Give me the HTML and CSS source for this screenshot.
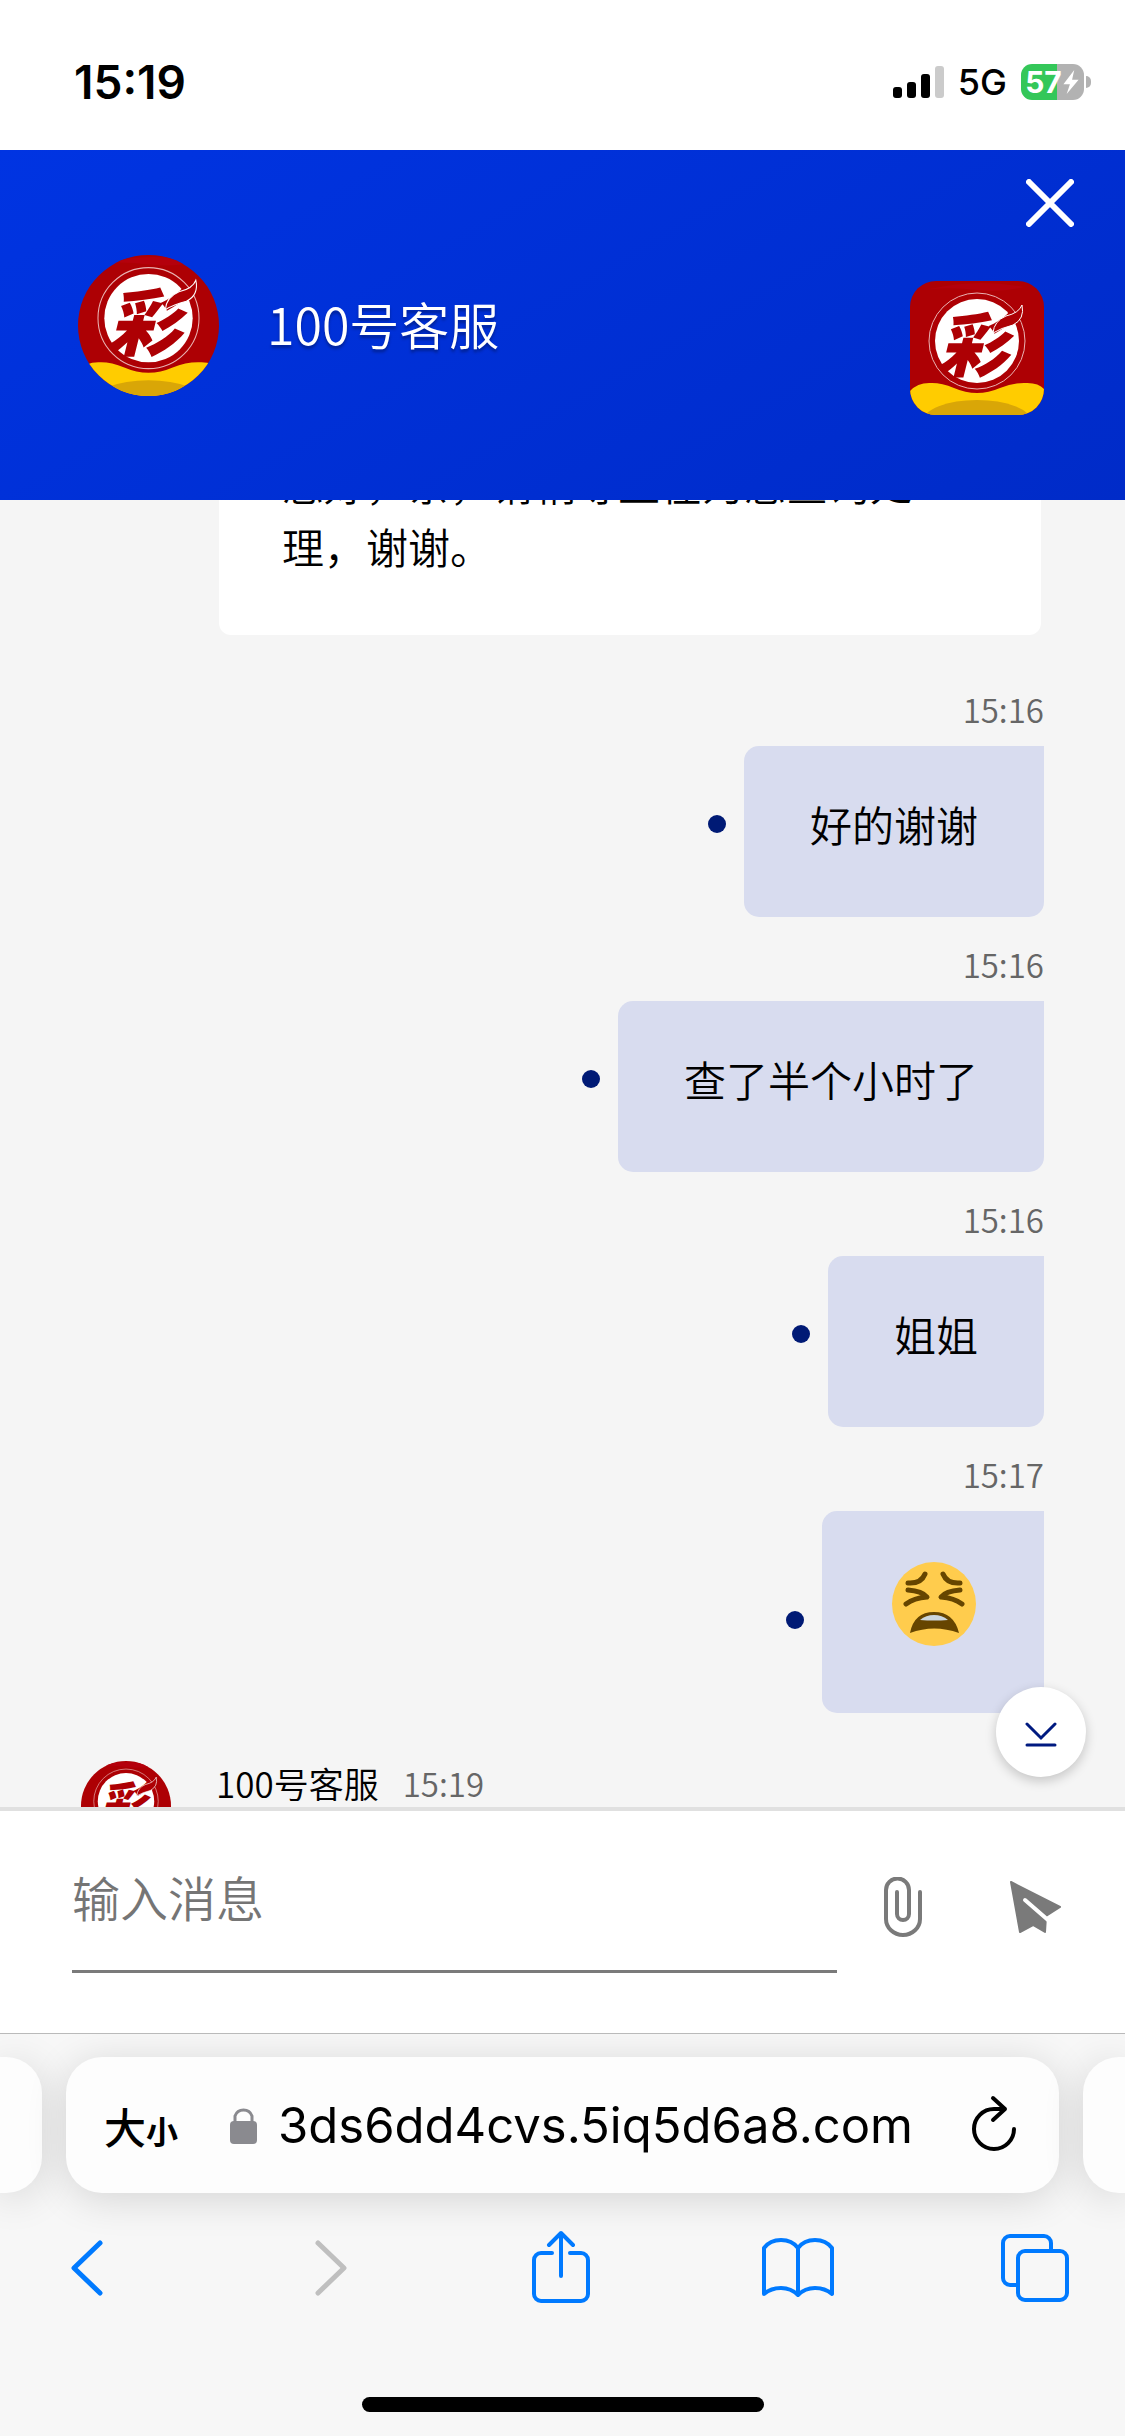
FILE: index.html
```html
<!DOCTYPE html>
<html lang="zh-CN">
<head>
<meta charset="utf-8">
<meta name="viewport" content="width=device-width, initial-scale=1">
<title>100号客服</title>
<link rel="stylesheet" href="styles.css">
</head>
<body>
<svg class="defs" aria-hidden="true">
  <symbol id="brand" viewBox="0 0 134 134">
    <rect width="134" height="134" fill="#ad0004"/>
    <path d="M20 8Q67 -3 114 6Q90 12 67 9T20 8Z" fill="#b4000c"/>
    <path d="M0 110Q8 101 22 102Q32 102 44 107Q67 117 90 107Q102 102 114 102Q128 101 134 108V134H0Z" fill="#fc0"/>
    <ellipse cx="67" cy="140" rx="54" ry="21" fill="#d9a607"/>
    <circle cx="67" cy="60" r="48" fill="#ad0004" stroke="#e9b3b4" stroke-width="1"/>
    <circle cx="67" cy="60" r="42" fill="#fff"/>
    <text class="brand-glyph" x="28" y="90">彩</text>
    <path d="M83 52Q84 40 96 35Q109 32 112 24Q115 38 103 44Q91 47 83 52Z" fill="#ad0004" stroke="#fff" stroke-width="1"/>
  </symbol>
</svg>

<div class="status-bar">
  <time class="clock">15:19</time>
  <div class="status-icons">
    <svg width="51" height="33" viewBox="0 0 51 33" aria-hidden="true">
      <rect x="0" y="21" width="9" height="11" rx="3"/>
      <rect x="14" y="16" width="9" height="16" rx="3"/>
      <rect x="28" y="8" width="9" height="24" rx="3"/>
      <rect x="42" y="0" width="9" height="32" rx="3" fill="#cbcbcb"/>
    </svg>
    <span class="network">5G</span>
    <span class="battery">
      <span class="battery-cell">
        <span class="battery-text">57</span>
        <svg width="18" height="26" viewBox="0 0 16 24" aria-hidden="true"><path d="M11 1L1 14H7L4 23L15 10H9Z" fill="#fff"/></svg>
      </span>
      <span class="battery-tip"></span>
    </span>
  </div>
</div>

<header class="chat-header">
  <svg class="agent-avatar" aria-hidden="true"><use href="#brand"/></svg>
  <h1 class="agent-name">100号客服</h1>
  <div class="header-side">
    <button class="close" type="button" aria-label="关闭">
      <svg width="48" height="48" viewBox="0 0 48 48" aria-hidden="true"><path d="M3 3L45 45M45 3L3 45" fill="none" stroke="#fff" stroke-width="6" stroke-linecap="round"/></svg>
    </button>
    <svg class="app-logo" aria-hidden="true"><use href="#brand"/></svg>
  </div>
</header>

<main class="chat">
  <div class="messages">
    <div class="message-in">
      <p class="bubble-in">您好，亲，请稍等正在为您查询处理，谢谢。</p>
    </div>

    <div class="message-out">
      <time class="time">15:16</time>
      <div class="row"><span class="dot"></span><p class="bubble-out">好的谢谢</p></div>
    </div>
    <div class="message-out">
      <time class="time">15:16</time>
      <div class="row"><span class="dot"></span><p class="bubble-out">查了半个小时了</p></div>
    </div>
    <div class="message-out">
      <time class="time">15:16</time>
      <div class="row"><span class="dot"></span><p class="bubble-out">姐姐</p></div>
    </div>
    <div class="message-out">
      <time class="time">15:17</time>
      <div class="row">
        <span class="dot"></span>
        <div class="bubble-out bubble-emoji">
          <svg width="84" height="84" viewBox="0 0 84 84" role="img" aria-label="疲惫">
            <circle cx="42" cy="42" r="42" fill="#ffcc4d"/>
            <g fill="none" stroke="#664500" stroke-width="5" stroke-linecap="round" stroke-linejoin="round">
              <path d="M16 21Q29 22 33 12M51 12Q55 22 68 21"/>
              <path d="M16 28Q30 29 35 35Q22 36 14 42M68 28Q54 29 49 35Q62 36 70 42"/>
            </g>
            <path d="M18 71Q22 50 42 50T67 71Q42 62 18 71Z" fill="#664500"/>
            <path d="M28 58Q34 53 42 53T56 58Q42 59 28 58Z" fill="#ccd6dd"/>
          </svg>
        </div>
      </div>
    </div>

    <div class="message-agent">
      <svg class="small-avatar" aria-hidden="true"><use href="#brand"/></svg>
      <div class="meta"><span class="meta-name">100号客服</span><time class="time">15:19</time></div>
    </div>
  </div>
  <button class="to-bottom" type="button" aria-label="滚动到底部">
    <svg width="32" height="26" viewBox="0 0 32 26" aria-hidden="true"><path d="M2 2L16 16L30 2M2 23H30" fill="none" stroke="#001a80" stroke-width="3" stroke-linecap="round"/></svg>
  </button>
</main>

<form class="composer">
  <input class="composer-input" type="text" aria-label="输入消息" placeholder="输入消息">
  <button class="icon-button" type="button" aria-label="附件">
    <svg width="38" height="60" viewBox="0 0 38 60" aria-hidden="true"><path d="M36 15V42A17 16 0 0 1 2 42V13A11 11 0 0 1 25 13V37A6 6 0 0 1 13 37V15" fill="none" stroke="#7a7a7a" stroke-width="4" stroke-linecap="round"/></svg>
  </button>
  <button class="icon-button" type="submit" aria-label="发送">
    <svg width="52" height="52" viewBox="0 0 52 52" aria-hidden="true">
      <path d="M1 1L50 26L36 35L35 51L23 44L10 51Z" fill="#7a7a7a" stroke="#7a7a7a" stroke-width="2" stroke-linejoin="round"/>
      <path d="M15 19L38 39" stroke="#fff" stroke-width="4" stroke-linecap="round"/>
    </svg>
  </button>
</form>

<footer class="browser">
  <div class="tabs">
    <span class="tab-peek tab-peek-left"></span>
    <div class="address-bar">
      <button class="text-size" type="button" aria-label="文字大小"><span class="size-large">大</span><span class="size-small">小</span></button>
      <svg class="lock" width="27" height="40" viewBox="0 0 27 40" aria-hidden="true"><path d="M5 17V11A9 9 0 0 1 22 11V17" fill="none" stroke="#8a8a8f" stroke-width="3"/><rect x="0" y="16" width="27" height="23" rx="4" fill="#8a8a8f"/></svg>
      <input class="url" type="text" aria-label="网址" value="3ds6dd4cvs.5iq5d6a8.com">
      <button class="icon-button" type="button" aria-label="重新加载">
        <svg width="46" height="60" viewBox="0 0 46 60" aria-hidden="true"><path d="M43 34A20 20 0 1 1 23 14H34M22 3L34 14L22 25" fill="none" stroke="#000" stroke-width="4" stroke-linecap="round" stroke-linejoin="round"/></svg>
      </button>
    </div>
    <span class="tab-peek tab-peek-right"></span>
  </div>
  <nav class="toolbar" aria-label="浏览器">
    <button class="tool" type="button" aria-label="后退">
      <svg width="32" height="56" viewBox="0 0 32 56" aria-hidden="true"><path d="M29 3L3 28L29 53" fill="none" stroke="#007aff" stroke-width="5" stroke-linecap="round" stroke-linejoin="round"/></svg>
    </button>
    <button class="tool" type="button" aria-label="前进">
      <svg width="46" height="56" viewBox="0 0 46 56" aria-hidden="true"><path d="M17 3L43 28L17 53" fill="none" stroke="#bfbfbf" stroke-width="5" stroke-linecap="round" stroke-linejoin="round"/></svg>
    </button>
    <button class="tool" type="button" aria-label="分享">
      <svg width="58" height="76" viewBox="0 0 58 76" aria-hidden="true"><path d="M20 23H9A7 7 0 0 0 2 30V64A7 7 0 0 0 9 71H49A7 7 0 0 0 56 64V30A7 7 0 0 0 49 23H38M29 46V3M17 15L29 3L41 15" fill="none" stroke="#007aff" stroke-width="4" stroke-linecap="round" stroke-linejoin="round"/></svg>
    </button>
    <button class="tool" type="button" aria-label="书签">
      <svg width="72" height="60" viewBox="0 0 72 60" aria-hidden="true"><path d="M36 10Q30 2 19 2T2 10V56Q9 50 19 50T36 57Q43 50 53 50T70 56V10Q64 2 53 2T36 10V57" fill="none" stroke="#007aff" stroke-width="4" stroke-linejoin="round"/></svg>
    </button>
    <button class="tool" type="button" aria-label="标签页">
      <svg width="68" height="68" viewBox="0 0 68 68" aria-hidden="true"><g fill="none" stroke="#007aff" stroke-width="4"><path d="M50 17V9A7 7 0 0 0 43 2H9A7 7 0 0 0 2 9V44A7 7 0 0 0 9 51H17"/><rect x="17" y="17" width="49" height="49" rx="7"/></g></svg>
    </button>
  </nav>
  <div class="home-indicator"></div>
</footer>
</body>
</html>
```
FILE: styles.css
```css
* { box-sizing: border-box; }

body {
  margin: 0;
  height: 100vh;
  display: flex;
  flex-direction: column;
  background: #fff;
  color: #000;
  font-family: "Noto Sans CJK SC", sans-serif;
  font-weight: 350;
}

h1, p { margin: 0; }

button {
  padding: 0;
  border: 0;
  background: none;
  color: inherit;
  font: inherit;
}

button svg { display: block; }

.defs { display: none; }

.brand-glyph {
  font: italic 900 70px "Noto Sans CJK SC", sans-serif;
  fill: #ad0004;
}

/* Status bar */
.status-bar {
  flex: none;
  height: 150px;
  padding: 0 34px 0 74px;
  display: flex;
  align-items: center;
  justify-content: space-between;
  font-family: Inter, sans-serif;
}

.clock {
  padding-top: 14px;
  font-size: 46px;
  font-weight: 600;
}

.status-icons {
  padding-top: 14px;
  display: flex;
  align-items: center;
  gap: 14px;
}

.network {
  font-size: 36px;
  font-weight: 500;
}

.battery {
  display: flex;
  align-items: center;
  gap: 2px;
}

.battery-cell {
  width: 63px;
  height: 36px;
  border-radius: 11px;
  display: flex;
  align-items: center;
  justify-content: center;
  background: linear-gradient(90deg, #34c759 57%, #b2b2b2 57%);
}

.battery-text {
  color: #fff;
  font-size: 30px;
  font-weight: 700;
  line-height: 36px;
}

.battery-tip {
  width: 5px;
  height: 12px;
  border-radius: 0 5px 5px 0;
  background: #b2b2b2;
}

/* Chat header */
.chat-header {
  flex: none;
  height: 350px;
  padding: 0 81px 0 78px;
  display: flex;
  align-items: center;
  background: linear-gradient(150deg, #0034e2, #002bc8);
  color: #fff;
}

.agent-avatar {
  width: 141px;
  height: 141px;
  border-radius: 50%;
}

.agent-name {
  flex: 1;
  margin-left: 48px;
  padding-bottom: 4px;
  font-size: 50px;
  font-weight: 350;
  line-height: 72px;
  text-shadow: 0 3px 3px rgba(0, 0, 0, .3);
}

.header-side {
  align-self: stretch;
  padding-top: 29px;
  display: flex;
  flex-direction: column;
  align-items: flex-end;
  gap: 54px;
}

.close { margin-right: -30px; }

.app-logo {
  width: 134px;
  height: 134px;
  border-radius: 26px;
}

/* Conversation */
.chat {
  flex: 1;
  min-height: 0;
  overflow: hidden;
  position: relative;
  background: #f5f5f5;
}

/* The list is scrolled part of the way through the conversation. */
.messages {
  margin-top: -94px;
  padding: 0 81px;
}

.message-in { padding: 0 3px 27px 138px; }

.bubble-in {
  padding: 45px 63px 58px;
  border-radius: 12px;
  background: #fff;
  font-size: 42px;
  line-height: 63px;
}

.message-out {
  padding-top: 23px;
  display: flex;
  flex-direction: column;
  align-items: flex-end;
}

.time {
  color: #666;
  font-size: 33px;
  line-height: 48px;
}

.row {
  padding-top: 13px;
  display: flex;
  align-items: flex-end;
  gap: 18px;
}

.dot {
  width: 18px;
  height: 18px;
  margin-bottom: 84px;
  border-radius: 50%;
  background: #001a75;
}

.bubble-out {
  padding: 46px 66px 62px;
  border-radius: 15px 0 15px 15px;
  background: #d8dcef;
  font-size: 42px;
  line-height: 63px;
}

.bubble-emoji {
  padding: 51px 68px 67px 70px;
}

.bubble-emoji svg { display: block; }

.message-agent {
  padding-top: 48px;
  display: flex;
  gap: 45px;
}

.small-avatar {
  width: 90px;
  height: 90px;
  border-radius: 50%;
}

.meta {
  display: flex;
  align-items: center;
  gap: 24px;
  height: 44px;
}

.meta-name {
  font-size: 35px;
  line-height: 48px;
}

.to-bottom {
  position: absolute;
  right: 39px;
  bottom: 30px;
  width: 90px;
  height: 90px;
  border-radius: 50%;
  display: flex;
  align-items: center;
  justify-content: center;
  background: #fff;
  box-shadow: 0 4px 12px rgba(0, 0, 0, .2);
}

.to-bottom svg { margin-top: 6px; }

/* Message composer */
.composer {
  flex: none;
  height: 227px;
  padding: 36px 63px 60px 72px;
  border-top: 4px solid #e0e0e0;
  border-bottom: 1px solid #bababa;
  display: flex;
  align-items: center;
  background: #fff;
}

.composer-input {
  flex: 1;
  min-width: 0;
  height: 126px;
  margin-right: 47px;
  padding: 0 0 26px;
  border: 0;
  border-bottom: 3px solid #7a7a7a;
  outline: 0;
  background: none;
  font: 350 48px "Noto Sans CJK SC", sans-serif;
}

.composer-input::placeholder { color: #757575; }

.composer .icon-button { padding-bottom: 6px; }
.composer .icon-button + .icon-button { margin-left: 88px; }

/* Browser controls */
.browser {
  flex: none;
  background: #f7f7f7;
  overflow: hidden;
}

.tabs {
  padding: 23px 0 37px;
  display: flex;
  gap: 24px;
}

.tab-peek,
.address-bar {
  height: 136px;
  background: #fdfdfd;
  box-shadow: 0 6px 40px rgba(0, 0, 0, .14);
}

.tab-peek { width: 42px; }
.tab-peek-left { border-radius: 0 36px 36px 0; }
.tab-peek-right { border-radius: 36px 0 0 36px; }

.address-bar {
  flex: 1;
  min-width: 0;
  padding: 0 42px 0 38px;
  border-radius: 36px;
  display: flex;
  align-items: center;
}

.text-size {
  display: flex;
  align-items: baseline;
}

.size-large {
  font-size: 42px;
  font-weight: 500;
}

.size-small {
  font-size: 32px;
  font-weight: 700;
}

.lock { margin: 0 21px 0 52px; }

.url {
  flex: 1;
  min-width: 0;
  padding: 0;
  border: 0;
  outline: 0;
  background: none;
  color: #000;
  font: 400 49px Inter, sans-serif;
}

.toolbar {
  height: 76px;
  padding: 0 54px 0 51px;
  display: flex;
  align-items: center;
  justify-content: space-between;
}

.tool {
  width: 72px;
  display: flex;
  justify-content: center;
}

.home-indicator {
  width: 402px;
  height: 15px;
  margin: 91px auto 24px;
  border-radius: 8px;
  background: #000;
}
```
